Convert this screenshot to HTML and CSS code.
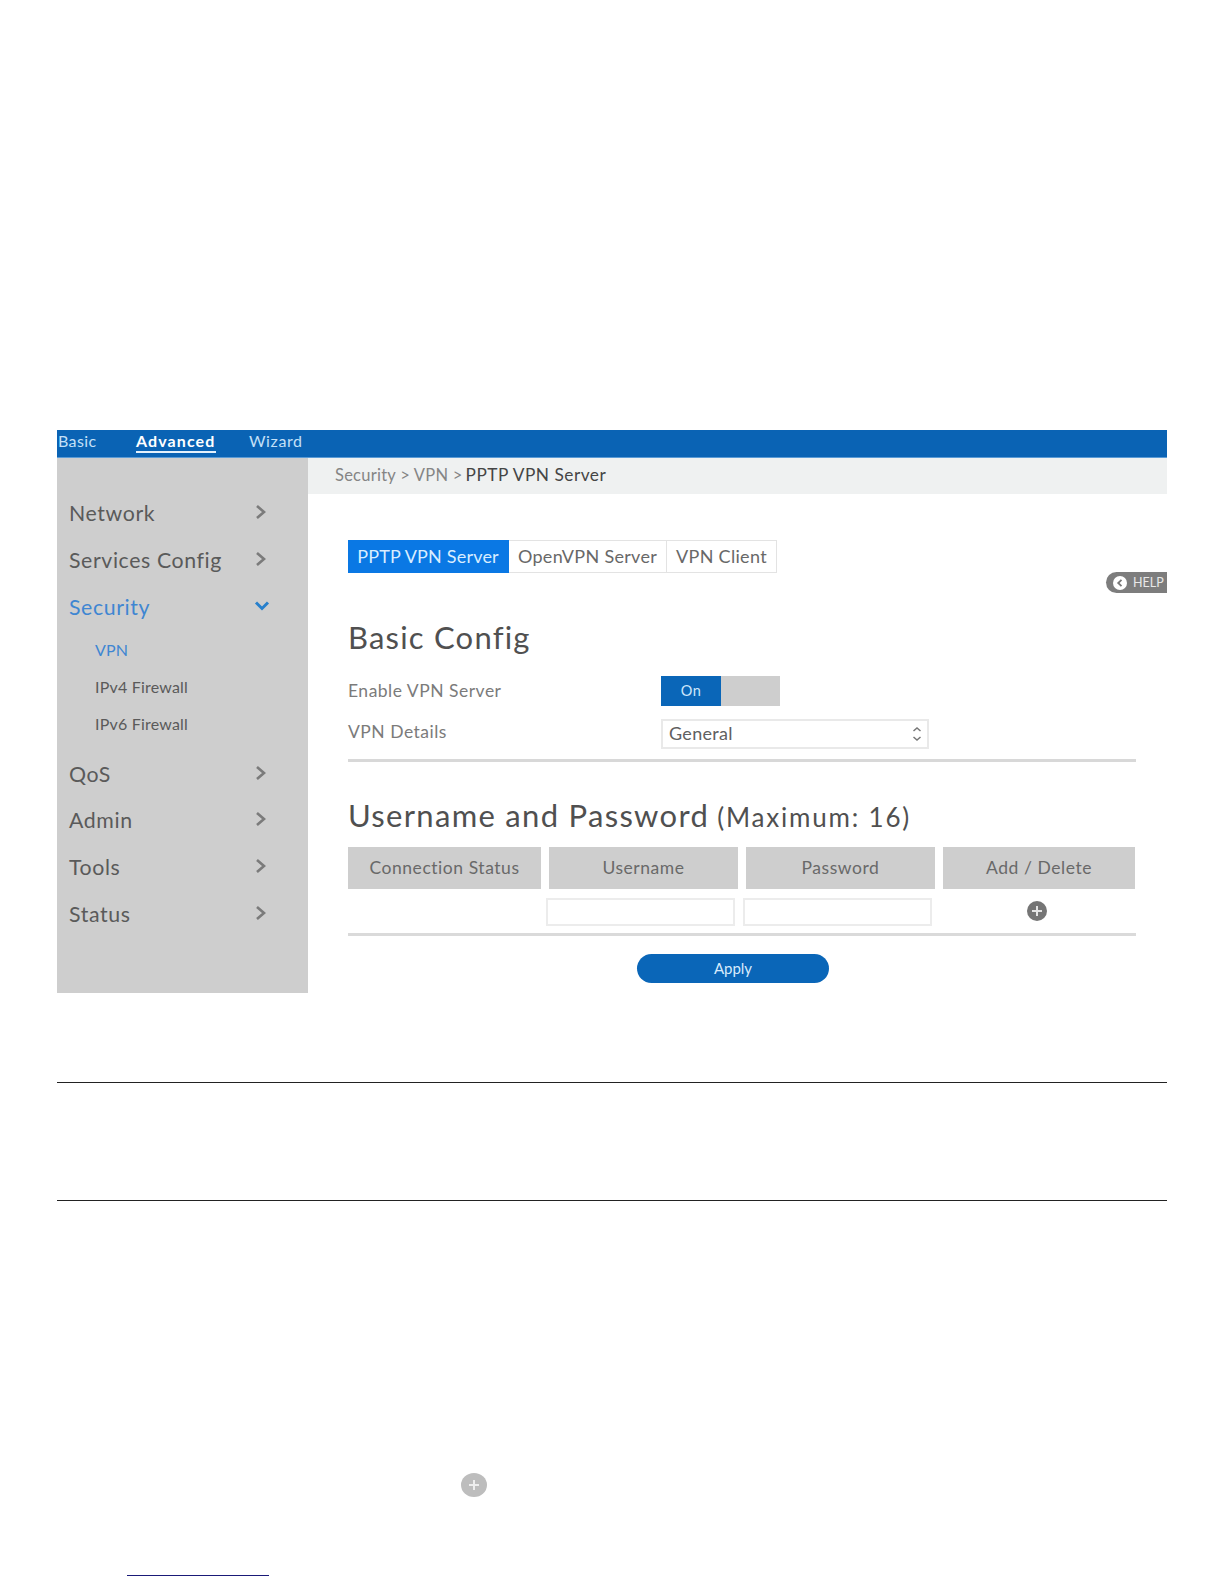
FILE: index.html
```html
<!DOCTYPE html>
<html lang="en">
<head>
<meta charset="utf-8">
<title>PPTP VPN Server</title>
<link rel="stylesheet" href="styles.css">
</head>
<body>
<main class="page">
  <section class="router">
    <nav class="topbar">
      <a class="top-link top-basic">Basic</a>
      <a class="top-link top-advanced">Advanced</a>
      <a class="top-link top-wizard">Wizard</a>
    </nav>
    <div class="body">
      <aside class="sidebar">
        <div class="item">Network<svg class="chev" viewBox="0 0 14 16"><path d="M3 2l7 6-7 6"/></svg></div>
        <div class="item">Services Config<svg class="chev" viewBox="0 0 14 16"><path d="M3 2l7 6-7 6"/></svg></div>
        <div class="item active">Security<svg class="chev down" viewBox="0 0 16 14"><path d="M2 3.500l6 6 6-6"/></svg></div>
        <div class="sub">
          <div class="subitem vpn active">VPN</div>
          <div class="subitem">IPv4 Firewall</div>
          <div class="subitem">IPv6 Firewall</div>
        </div>
        <div class="item">QoS<svg class="chev" viewBox="0 0 14 16"><path d="M3 2l7 6-7 6"/></svg></div>
        <div class="item">Admin<svg class="chev" viewBox="0 0 14 16"><path d="M3 2l7 6-7 6"/></svg></div>
        <div class="item">Tools<svg class="chev" viewBox="0 0 14 16"><path d="M3 2l7 6-7 6"/></svg></div>
        <div class="item">Status<svg class="chev" viewBox="0 0 14 16"><path d="M3 2l7 6-7 6"/></svg></div>
      </aside>
      <div class="content">
        <div class="crumbs"><span class="crumb-path">Security &gt; VPN &gt;</span><span class="crumb-here">PPTP VPN Server</span></div>
        <div class="help"><svg class="help-icon" viewBox="0 0 14 14"><circle cx="7" cy="7" r="7"/><path d="M8.500 3.800L5.200 7l3.300 3.200"/></svg>HELP</div>
        <div class="form">
          <div class="tabs">
            <span class="tab tab-pptp">PPTP VPN Server</span>
            <span class="tab tab-open">OpenVPN Server</span>
            <span class="tab tab-client">VPN Client</span>
          </div>
          <h2 class="title">Basic Config</h2>
          <div class="row row-enable"><span class="label label-enable">Enable VPN Server</span><span class="toggle"><span class="toggle-on">On</span></span></div>
          <div class="row row-details"><span class="label">VPN Details</span><span class="select">General<svg class="updown" viewBox="0 0 10 16"><path d="M1.500 5L5 2l3.500 3M1.500 11L5 14l3.500-3"/></svg></span></div>
          <h2 class="title title-users">Username and Password <span class="max">(Maximum: 16)</span></h2>
          <div class="thead">
            <span class="th th-status">Connection Status</span>
            <span class="th">Username</span>
            <span class="th">Password</span>
            <span class="th">Add / Delete</span>
          </div>
          <div class="entry">
            <span class="input"></span>
            <span class="input"></span>
            <svg class="plus" viewBox="0 0 20 20"><circle cx="10" cy="10" r="10"/><path d="M10 5v10M5 10h10"/></svg>
          </div>
          <div class="apply">Apply</div>
        </div>
      </div>
    </div>
  </section>
  <div class="note"></div>
  <svg class="plus plus-inline" viewBox="0 0 26 24"><ellipse cx="13" cy="12" rx="13" ry="12"/><path d="M13 7v10M8 12h10"/></svg>
  <div class="footer-rule"></div>
</main>
</body>
</html>
```
FILE: styles.css
```css
* { box-sizing: border-box; }
body { margin: 0; background: #fff; font-family: Lato, "Open Sans", sans-serif; color: #555; }
.page { height: 1584px; padding: 430px 57px 0; overflow: hidden; }
.router { height: 563px; }
.topbar { height: 28px; background: #0a63b4; border-bottom: 1px solid #5a9bd6; display: flex; color: #c4e0f8; font-size: 16px; line-height: 21px; letter-spacing: .4px; }
.top-link { height: 23px; white-space: nowrap; }
.top-basic { width: 79px; padding-left: 1px; }
.top-advanced { width: 80px; margin-right: 33px; color: #fff; font-weight: 700; letter-spacing: 1.100px; border-bottom: 2px solid #e4f1fc; }
.top-wizard { letter-spacing: .6px; }
.body { display: flex; height: 535px; }
.sidebar { width: 251px; background: #cecece; padding: 32px 40px 0 12px; font-size: 21.300px; letter-spacing: .6px; color: #5a5a5a; }
.item { height: 46.700px; display: flex; align-items: center; justify-content: space-between; white-space: nowrap; }
.chev { width: 14px; height: 16px; margin-top: -2px; fill: none; stroke: #7b7b7b; stroke-width: 2.600; }
.chev.down { width: 16px; height: 14px; margin-right: -2px; stroke: #2880cc; stroke-width: 3; }
.active { color: #3f86d2; }
.sub { padding: 2px 0 8px 26px; font-size: 16px; letter-spacing: .2px; }
.subitem { height: 36.800px; line-height: 36.800px; white-space: nowrap; }
.content { flex: 1; position: relative; }
.crumbs { height: 36px; background: #eff1f1; padding-left: 27px; display: flex; gap: 3px; line-height: 35px; font-size: 16.500px; letter-spacing: .25px; white-space: nowrap; }
.crumb-path { color: #858585; }
.crumb-here { color: #454545; font-size: 17.300px; line-height: 34px; letter-spacing: .5px; }
.help { position: absolute; right: 0; top: 114px; width: 61px; height: 21px; border-radius: 11px 0 0 11px; background: #7d7d7d; color: #e8e8e8; font-size: 12.500px; display: flex; align-items: center; gap: 6px; padding-left: 7px; }
.help-icon { width: 14px; height: 14px; fill: #fff; }
.help-icon path { fill: none; stroke: #777; stroke-width: 1.800; }
.form { padding: 46px 31px 0 40px; }
.tabs { display: flex; height: 33px; line-height: 31px; font-size: 18px; letter-spacing: .3px; text-align: center; white-space: nowrap; color: #686868; }
.tab { border: 1px solid #e3e3e3; border-left: 0; }
.tab-pptp { width: 161px; background: #0a78e4; border-color: #0a78e4; color: #d9edff; letter-spacing: .2px; }
.tab-open { width: 158px; }
.tab-client { width: 110px; }
.title { margin: 43px 0 0; font-size: 31px; line-height: 42px; font-weight: 400; letter-spacing: 1.200px; color: #505050; white-space: nowrap; }
.row { display: flex; font-size: 17.500px; letter-spacing: .5px; color: #7b7b7b; }
.label { width: 313px; line-height: 30px; white-space: nowrap; }
.row-enable { height: 43px; margin-top: 18px; }
.row-details { height: 43px; border-bottom: 3px solid #d8d8d8; }
.row-details .label { line-height: 25px; }
.toggle { width: 119px; height: 30px; background: #cecece; }
.toggle-on { display: block; width: 60px; height: 30px; background: #0a66b8; color: #cfe6fb; font-size: 14.500px; line-height: 29px; text-align: center; }
.select { width: 268px; height: 30px; border: 2px solid #e9e9e9; padding: 0 6px 2px 6px; display: flex; align-items: center; justify-content: space-between; font-size: 18px; line-height: 24px; letter-spacing: .3px; color: #606060; }
.updown { width: 10px; height: 16px; margin: 2px -1px 0 0; fill: none; stroke: #777; stroke-width: 1.500; }
.title-users { margin-top: 32px; letter-spacing: 1.300px; }
.max { font-size: 26px; letter-spacing: 1.800px; margin-left: -1px; }
.thead { display: grid; grid-template-columns: 193px 189px 189px 192px; gap: 8px; height: 42px; margin-top: 9px; }
.th { background: #cecece; color: #696969; font-size: 17.500px; letter-spacing: .55px; line-height: 41px; text-align: center; white-space: nowrap; }
.entry { height: 47px; border-bottom: 3px solid #dadada; display: flex; padding: 9px 0 0 198px; gap: 8px; }
.input { width: 189px; height: 28px; border: 2px solid #ececec; }
.plus { width: 20px; height: 20px; margin: 3px 0 0 87px; fill: #757575; }
.plus path { stroke: #e4e4e4; stroke-width: 2; }
.apply { width: 192px; height: 29px; margin: 18px 0 0 289px; border-radius: 15px; background: #0a66b8; color: #d8ebfc; font-size: 15px; line-height: 28px; text-align: center; }
.note { margin-top: 89px; height: 119px; border: 0 solid #222; border-width: 1px 0; }
.plus-inline { display: block; width: 26px; height: 24px; margin: 272px 0 0 404px; fill: #bdbdbd; }
.plus-inline path { stroke: #eee; }
.footer-rule { width: 142px; height: 1px; margin: 78px 0 0 70px; background: #1a1a78; }
```
